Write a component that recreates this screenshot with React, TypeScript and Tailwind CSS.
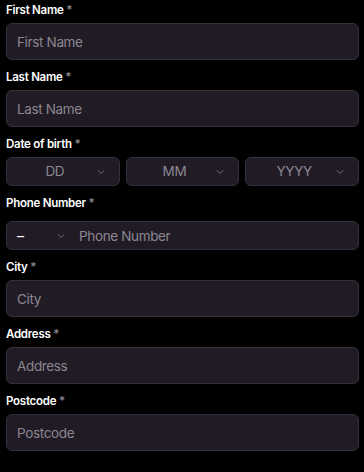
import React from "react";
import { ChevronDown } from "lucide-react";

const font = { fontFamily: "Inter, 'Noto Sans', sans-serif" };

function Label({ text }: { text: string }) {
  return (
    <label className="block h-4 text-[11.5px] leading-4 font-semibold text-white tracking-[-0.25px]">
      {text} <span className="text-[#8b8791]">*</span>
    </label>
  );
}

function TextField({ label, placeholder }: { label: string; placeholder: string }) {
  return (
    <div className="flex flex-col gap-[5px]">
      <Label text={label} />
      <input
        placeholder={placeholder}
        className="h-[37px] w-full rounded-[6px] border border-[#35303b] bg-[#211b26] px-[10px] text-[13.5px] tracking-[-0.35px] text-white placeholder:text-[#8b8791] outline-none"
      />
    </div>
  );
}

function SelectBox({ value }: { value: string }) {
  return (
    <div className="relative flex h-[29px] flex-1 items-center justify-center rounded-[6px] border border-[#35303b] bg-[#211b26] pr-[16px]">
      <span className="text-[13.5px] tracking-[-0.3px] text-[#8b8791]">{value}</span>
      <ChevronDown className="absolute right-[12px] h-3 w-3 text-[#6e6a73]" strokeWidth={2} />
    </div>
  );
}

export default function App() {
  const [phone, setPhone] = React.useState("");

  return (
    <div className="min-h-[472px] bg-black pl-[6px] pr-[5px] pt-[2px]" style={font}>
      <div className="flex flex-col gap-[9px]">
        <TextField label="First Name" placeholder="First Name" />
        <TextField label="Last Name" placeholder="Last Name" />

        <div className="flex flex-col gap-[5px]">
          <Label text="Date of birth" />
          <div className="flex gap-[6px]">
            <SelectBox value="DD" />
            <SelectBox value="MM" />
            <SelectBox value="YYYY" />
          </div>
        </div>

        <div className="flex flex-col gap-[10px]">
          <Label text="Phone Number" />
          <div className="flex h-[29px] items-center rounded-[6px] border border-[#35303b] bg-[#211b26]">
            <div className="flex w-[66px] items-center justify-between pl-[10px] pr-[6px]">
              <span className="text-[14px] text-white">–</span>
              <ChevronDown className="h-3 w-3 text-[#6e6a73]" strokeWidth={2} />
            </div>
            <input
              value={phone}
              onChange={(e) => setPhone(e.target.value)}
              placeholder="Phone Number"
              className="h-full flex-1 bg-transparent pl-[6px] pr-[10px] text-[13.5px] tracking-[-0.35px] text-white placeholder:text-[#8b8791] outline-none"
            />
          </div>
        </div>

        <TextField label="City" placeholder="City" />
        <TextField label="Address" placeholder="Address" />
        <TextField label="Postcode" placeholder="Postcode" />
      </div>
    </div>
  );
}
